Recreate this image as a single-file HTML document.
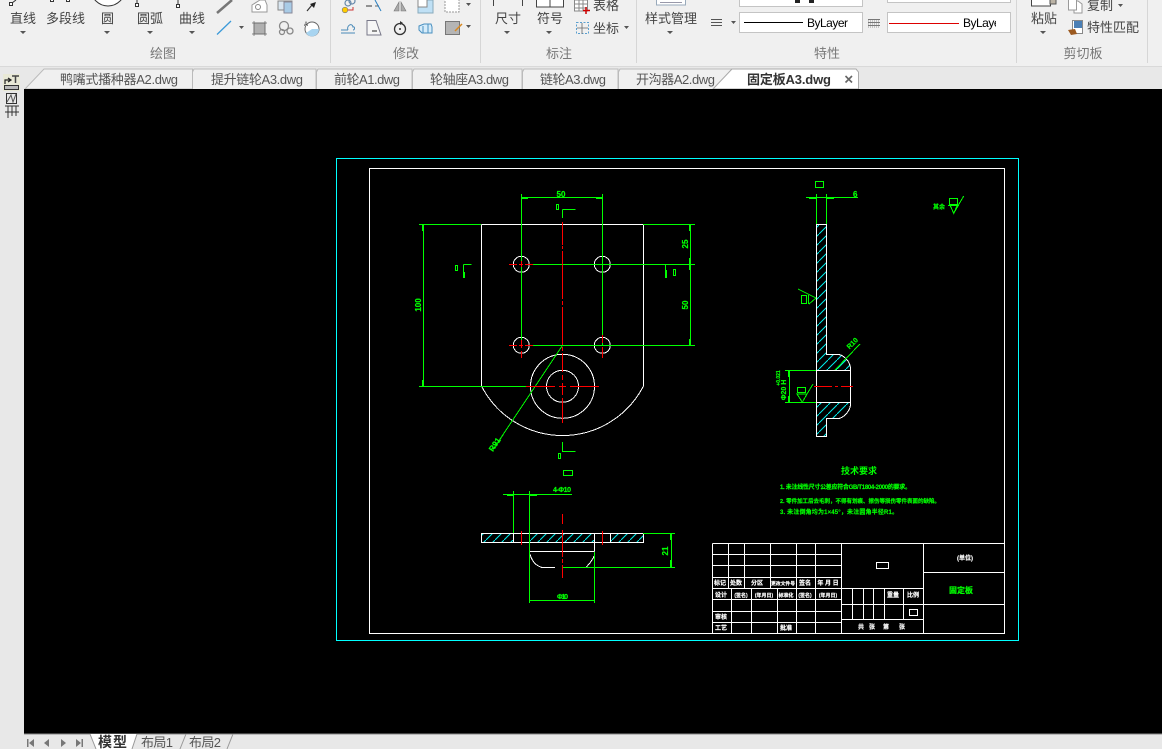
<!DOCTYPE html>
<html lang="zh"><head><meta charset="utf-8"><title>固定板A3.dwg</title>
<style>
html,body{margin:0;padding:0;width:1162px;height:749px;overflow:hidden;background:#f0f0f0}
svg{display:block;position:absolute;left:0;top:0}
text{font-family:"Liberation Sans","Noto Sans CJK SC",sans-serif}
.l{font-size:13px;fill:#444}
.s{font-size:13px;fill:#777;text-anchor:middle}
.t{font-size:13px;fill:#555}
.c{fill:#555}
.d{fill:#0f0;font-size:8px;font-weight:bold;stroke:#0f0;stroke-width:.2}
.n{fill:#0f0;font-size:6px;font-weight:bold;stroke:#0f0;stroke-width:.15}
.w{fill:#fff;font-size:6px;font-weight:bold;text-anchor:middle;stroke:#fff;stroke-width:.15}
</style></head><body>
<svg width="1162" height="749" viewBox="0 0 1162 749" xmlns="http://www.w3.org/2000/svg">
<defs>
<pattern id="h" patternUnits="userSpaceOnUse" width="9" height="9"><path d="M-1 10L10 -1" stroke="#0ee" stroke-width="1" fill="none"/></pattern>
</defs>

<!-- ribbon -->
<rect width="1162" height="66" fill="#f0f0f0"/>
<rect y="66" width="1162" height="1.5" fill="#d9d9d9"/>
<rect y="67" width="1162" height="22" fill="#e8e8e8"/>
<g stroke="#d6d6d6" stroke-width="1"><path d="M330.500 0V63M480.500 0V63M636.500 0V63M1016.500 0V63M1147.500 0V63"/></g>

<!-- ribbon labels -->
<text class="l" x="10" y="23" textLength="26">直线</text>
<text class="l" x="46" y="23" textLength="39">多段线</text>
<text class="l" x="101" y="23" textLength="13">圆</text>
<text class="l" x="137" y="23" textLength="26">圆弧</text>
<text class="l" x="179" y="23" textLength="26">曲线</text>
<text class="s" x="163" y="58">绘图</text>
<text class="s" x="406" y="58">修改</text>
<text class="l" x="495" y="23" textLength="26">尺寸</text>
<text class="l" x="537" y="23" textLength="26">符号</text>
<text class="l" x="593" y="10" textLength="26">表格</text>
<text class="l" x="593" y="33" textLength="26">坐标</text>
<text class="s" x="559" y="58">标注</text>
<text class="l" x="645" y="23" textLength="52">样式管理</text>
<text class="s" x="827" y="58">特性</text>
<text class="l" x="1031" y="23" textLength="26">粘贴</text>
<text class="l" x="1087" y="10" textLength="26">复制</text>
<text class="l" x="1087" y="32" textLength="52">特性匹配</text>
<text class="s" x="1083" y="58">剪切板</text>

<!-- carets -->
<g class="c">
<path d="M20 31h6l-3 3zM104 31h6l-3 3zM147 31h6l-3 3zM189 31h6l-3 3zM239 26h5l-2.500 3zM466 25h5l-2.500 3zM466 3h5l-2.500 3zM504 31h6l-3 3zM546 31h6l-3 3zM624 26h5l-2.500 3zM667 31h6l-3 3zM731 21h5l-2.500 3zM852 21h6l-3 3zM1000 21h6l-3 3zM1040 31h6l-3 3zM1118 4h5l-2.500 3z"/>
</g>

<!-- draw icons -->
<g fill="none" stroke="#333" stroke-width="1">
<path d="M12 3L16 0"/><rect x="9.500" y="2.500" width="3" height="3" fill="#fff"/>
<rect x="50.500" y="-1.500" width="3" height="3" fill="#fff"/><rect x="66.500" y="-1.500" width="3" height="3" fill="#fff"/>
<circle cx="108" cy="-11" r="17" fill="#fff"/>
<rect x="135.500" y="3.500" width="3" height="3" fill="#fff"/><path d="M137 3V0"/>
<rect x="176.500" y="4.500" width="3" height="3" fill="#fff"/><path d="M178 4V0"/>
</g>
<path d="M217 13L232 0" stroke="#777" stroke-width="2.500"/>
<path d="M217 34.500L231 21" stroke="#3b9ad9" stroke-width="1.300"/>
<path d="M252 5L260 0H265L267 5V12H252Z" fill="#fff" stroke="#999"/><circle cx="258" cy="7" r="2.500" fill="none" stroke="#888"/>
<rect x="278" y="1" width="14" height="9" fill="#d9e6f0" stroke="#888"/><rect x="284" y="2" width="8" height="11" fill="#a8cbe6" stroke="#889"/>
<path d="M307 11L312 5" stroke="#333" stroke-width="1.200"/><path d="M310 4L316 2L314 8Z" fill="#222"/>
<rect x="254" y="23" width="11" height="11" fill="#b0b0b0" stroke="#888"/><path d="M252 23H267M252 34H267M254 21V36M265 21V36" stroke="#666" fill="none" stroke-width=".7"/>
<g fill="none" stroke="#888" stroke-width="1.300"><circle cx="284" cy="26" r="4.500"/><circle cx="290" cy="31" r="3"/><circle cx="282" cy="32" r="2.500"/></g>
<circle cx="312" cy="29" r="7" fill="#fff" stroke="#666"/><path d="M312 29H319A7 7 0 0 1 306 33Z" fill="#a8d4f0"/>
<text x="304" y="26" font-size="6" fill="#333">A</text>
<!-- modify icons -->
<circle cx="345" cy="10" r="2.800" fill="#fc0" stroke="#777" stroke-width=".6"/>
<g fill="none" stroke="#68a" stroke-width="1.200"><circle cx="348" cy="3" r="3"/><circle cx="352" cy="1" r="3"/></g>
<path d="M348 10H353V7" stroke="#c33" fill="none"/>
<path d="M366 6H372" stroke="#333"/><path d="M375 6H379" stroke="#666"/><path d="M375 0L381 11" stroke="#2a7fc0"/>
<path d="M399 2V11H394ZM401 2V11H406Z" fill="#aaa" stroke="#777" stroke-width=".6"/>
<rect x="418" y="0" width="15" height="13" fill="#bfe0f5" stroke="#8ab"/><rect x="418" y="-2" width="9" height="9" fill="#fff" stroke="#888"/>
<rect x="445" y="-2" width="14" height="14" fill="#fff" stroke="#999" stroke-dasharray="2 1"/>
<path d="M341 33H355M341 30H348M348 30C346 26 352 22 353 27C355 26 355 30 353 30" fill="none" stroke="#4a8ab8" stroke-width="1"/>
<path d="M367 20.500H376L381 35H367Z" fill="#f6f6f6" stroke="#778"/><path d="M372 31H377" stroke="#222"/>
<circle cx="400" cy="29" r="5.500" fill="none" stroke="#333" stroke-width="1.300"/><circle cx="400" cy="29" r="1" fill="#333"/><path d="M400 21l3 2-3 2z" fill="#333"/>
<g fill="#d6ecfa" stroke="#4a90c0"><path d="M419 26L424 24H431L432 27V33H422L419 30Z"/><path d="M423 26V33M428 24V33"/></g>
<rect x="445.500" y="21.500" width="14" height="13" fill="#b5b5b5" stroke="#777"/><path d="M455 31L462 24" stroke="#d88820" stroke-width="1.500"/>
<!-- annotate icons -->
<path d="M493.500 0V6M522.500 0V6" stroke="#444"/>
<path d="M536.500 0V7H563.500V0M550 0V7" fill="#fff" stroke="#444"/>
<g stroke="#888" fill="#fff"><rect x="574.500" y="0" width="13" height="11"/><path d="M574 4H587M574 8H587M579 0V11M583 0V11" fill="none"/></g>
<path d="M586 7V14M583 10.500H590" stroke="#c00" stroke-width="1.500"/>
<g fill="none" stroke="#5a9fcf" stroke-dasharray="2 1.500"><rect x="576.500" y="22.500" width="12" height="11"/></g><path d="M582 23V34M577 28H588" stroke="#666" stroke-width=".8"/>
<rect x="656.500" y="-4" width="29" height="9" fill="#fff" stroke="#9ab"/><path d="M660 2.500H682" stroke="#99a"/>
<!-- properties -->
<path d="M711 19.500H722M711 22.500H722M711 25.500H722" stroke="#555"/>
<rect x="739.500" y="-10" width="123" height="16.500" fill="#fff" stroke="#c4c4c4"/>
<rect x="795" y="0" width="5" height="3" fill="#222"/><rect x="809" y="0" width="5" height="3" fill="#222"/>
<rect x="739.500" y="12.500" width="123" height="20" fill="#fff" stroke="#c4c4c4"/>
<path d="M744 22.500H803" stroke="#000" stroke-width="1"/>
<text x="807" y="27" font-size="12" fill="#000" textLength="41">ByLayer</text>
<path d="M868 19.500H880M868 22.500H880M868 25.500H880" stroke="#777"/>
<path d="M868 21H880M868 24H880M868 27H880" stroke="#999" stroke-dasharray="1 1"/>
<rect x="887.500" y="-10" width="123" height="12.500" fill="#fff" stroke="#c4c4c4"/>
<rect x="887.500" y="12.500" width="123" height="20" fill="#fff" stroke="#c4c4c4"/>
<path d="M889 23.500H959" stroke="#d00" stroke-width="1"/>
<svg x="963" y="10" width="33" height="24"><text x="0" y="17" font-size="12" fill="#000" textLength="41">ByLayer</text></svg>
<!-- clipboard icons -->
<rect x="1031.500" y="-6" width="19" height="12" fill="#fff" stroke="#444"/><rect x="1050" y="-4" width="6" height="8" fill="#bbb3a5" stroke="#555"/>
<path d="M1069 1H1078L1082 4V13H1074V6H1069Z" fill="#fff" stroke="#999"/><rect x="1068.500" y="-4" width="8" height="14" fill="#fff" stroke="#999"/>
<rect x="1072.500" y="20.500" width="10" height="13" fill="#fff" stroke="#888"/><rect x="1074" y="21" width="8" height="7" fill="#4a7fb5"/>
<path d="M1068 30L1075 29L1077 34L1071 35Z" fill="#9c5a20"/>

<!-- doc tabs -->
<path d="M25 89L44 69H192.500V89Z" fill="#f0f0f0" stroke="#bbb"/>
<path d="M192.500 89V72L194 69H316V89" fill="#f0f0f0" stroke="#bbb"/>
<path d="M316.500 89V72L318 69H412V89" fill="#f0f0f0" stroke="#bbb"/>
<path d="M412.500 89V72L414 69H522V89" fill="#f0f0f0" stroke="#bbb"/>
<path d="M522.500 89V72L524 69H618V89" fill="#f0f0f0" stroke="#bbb"/>
<path d="M618.500 89V72L620 69H732L714 89" fill="#f0f0f0" stroke="#bbb"/>
<path d="M713 89L732 69H856L858.500 72V89Z" fill="#fff" stroke="#aaa"/>
<text class="t" x="60" y="84" textLength="118">鸭嘴式播种器A2.dwg</text>
<text class="t" x="211" y="84" textLength="92">提升链轮A3.dwg</text>
<text class="t" x="334" y="84" textLength="66">前轮A1.dwg</text>
<text class="t" x="430" y="84" textLength="79">轮轴座A3.dwg</text>
<text class="t" x="540" y="84" textLength="66">链轮A3.dwg</text>
<text class="t" x="636" y="84" textLength="79">开沟器A2.dwg</text>
<text x="747" y="84" font-size="13" font-weight="bold" fill="#333" textLength="84">固定板A3.dwg</text>
<path d="M845.500 76L852 82.500M852 76L845.500 82.500" stroke="#666" stroke-width="1.600"/>

<!-- left rail -->
<rect x="0" y="67" width="24" height="682" fill="#e8e8e8"/>
<rect x="3" y="74" width="17" height="17" fill="#e9e9d6"/>
<path d="M5 84V80H10M8 78L11 80L8 82" fill="none" stroke="#222" stroke-width="1.200"/>
<path d="M12 76H19M15.500 76V83" stroke="#444" stroke-width="1.500"/>
<rect x="4.500" y="85.500" width="14" height="4" fill="#bbb" stroke="#333"/>
<rect x="6.500" y="93.500" width="10" height="10" fill="none" stroke="#333"/><path d="M7 102L11 95L13 102L16 94" fill="none" stroke="#555"/>
<path d="M5 106H19M5 112H19M8 106V118M12 106V116M16 106V116" stroke="#333" fill="none"/>

<!-- canvas -->
<rect x="24" y="89" width="1138" height="645" fill="#000"/>

<g shape-rendering="crispEdges" fill="none">
<rect x="336.500" y="158.500" width="682" height="482" stroke="#0ff"/>
<rect x="369.500" y="168.500" width="635" height="465" stroke="#fff"/>
</g>

<!-- hatch -->
<g shape-rendering="crispEdges">
<path d="M816.500 224.500H826.500V354.500H839C845 356 850 362 850.500 370.500H816.500Z" fill="url(#h)"/>
<path d="M816.500 402.500H850.500C850 410 845 417 839 418.500H826.500V436.500H816.500Z" fill="url(#h)"/>
<rect x="481.500" y="533.500" width="32" height="9" fill="url(#h)"/>
<rect x="529.500" y="533.500" width="65" height="9" fill="url(#h)"/>
<rect x="610.500" y="533.500" width="33" height="9" fill="url(#h)"/>
</g>

<!-- white geometry -->
<g fill="none" stroke="#fff" stroke-width="1" shape-rendering="crispEdges">
<path d="M481.500 224.500H643.500V386M481.500 224.500V386A91 91 0 0 0 643.500 386"/>
<circle cx="562.500" cy="386.300" r="32"/><circle cx="562.500" cy="386.300" r="16"/>
<circle cx="521.300" cy="264.300" r="8"/><circle cx="602.300" cy="264.300" r="8"/><circle cx="521.300" cy="345.300" r="8"/><circle cx="602.300" cy="345.300" r="8"/>
<path d="M816.500 224.500H826.500V354.500H839C845 356 850 362 850.500 368V405C850 410 845 417 839 418.500H826.500V436.500H816.500Z"/>
<path d="M816.500 370.500H850.500M816.500 402.500H850.500"/>
<path d="M481.500 533.500H643.500V542.500H481.500ZM513.500 533.500V542.500M529.500 533.500V551.500M594.500 533.500V551.500M610.500 533.500V542.500M529.500 551.500H594.500"/>
<path d="M530 554C532 562 537 566 542 567.500H555M583 567.500H586C589 564 593 560 594 556"/>
</g>

<!-- green dims -->
<g fill="none" stroke="#0f0" stroke-width="1" shape-rendering="crispEdges">
<path d="M521.500 194V345M602.500 194V345M521 197.500H602"/>
<path d="M419 224.500H481M419 386.500H526M423.500 225V386"/>
<path d="M643 224.500H695M530 264.500H695M530 345.500H695M690.500 225V345"/>
<path d="M806 197.500H858M816.500 194V224M826.500 194V224"/>
<path d="M785 370.500H816M785 402.500H816M789.500 371V402"/>
<path d="M798 289L816 298L809 304M808.500 295V304"/>
<rect x="801.500" y="295.500" width="5" height="8"/>
<rect x="815.500" y="181.500" width="8" height="6"/>
<rect x="797.500" y="387.500" width="8" height="5"/>
<rect x="949.500" y="198.500" width="8" height="6"/>
<path d="M948 205.500H959"/>
<path d="M503 494.500H572M513.500 491V533M529.500 491V603M594.500 552V603M530 600.500H594"/>
<path d="M643 533.500H675M562 567.500H675M671.500 534V567"/>
<rect x="556.500" y="204.500" width="2" height="5"/><path d="M562.500 209.500H575.500M562.500 209.500V218"/>
<rect x="455.500" y="265.500" width="2" height="5"/><path d="M463.500 264.500H471.500M463.500 264.500V278"/>
<rect x="673.500" y="269.500" width="2" height="6"/><path d="M665.500 265V278"/>
<path d="M562.500 442V451.500H575.500"/><rect x="558.500" y="453.500" width="2" height="5"/>
<rect x="563.500" y="470.500" width="9" height="5"/>
<path d="M562.300 345.700L493.300 449.300"/><path d="M835 370L860 344"/>
<path d="M797 394H807L802.300 402.300ZM807 394L813 384"/>
<path d="M950 205L953.700 213.300L957.500 205M953.700 213.300L963.700 196"/>
</g>
<g fill="#0f0" shape-rendering="crispEdges">
<rect x="521" y="197" width="7" height="2"/><rect x="596" y="197" width="7" height="2"/>
<rect x="422" y="225" width="2" height="6"/><rect x="422" y="380" width="2" height="6"/>
<rect x="689" y="225" width="2" height="6"/><rect x="689" y="258" width="2" height="12"/><rect x="689" y="339" width="2" height="6"/>
<rect x="809" y="197" width="7" height="2"/><rect x="827" y="197" width="7" height="2"/>
<rect x="788" y="371" width="2" height="6"/><rect x="788" y="396" width="2" height="6"/>
<rect x="507" y="494" width="6" height="2"/><rect x="530" y="494" width="7" height="2"/>
<rect x="670" y="534" width="2" height="6"/><rect x="670" y="560" width="2" height="7"/>
<rect x="463" y="272" width="2" height="6"/><rect x="665" y="270" width="2" height="8"/>
</g>

<!-- red center lines -->
<g fill="none" stroke="#f00" stroke-width="1" shape-rendering="crispEdges">
<path d="M562.500 222V245M562.500 246V249M562.500 251V299M562.500 301V305M562.500 307V345M562.500 347V351M562.500 353V372M562.500 375V380M562.500 383V395M562.500 398V423"/>
<path d="M526 386.500H555M559 386.500H566M570 386.500H599"/>
<path d="M509 264.500H517M519 264.500H523M525 264.500H533M521.500 261V267"/>
<path d="M509 345.500H517M519 345.500H523M525 345.500H533M521.500 340V348M521.500 351V358"/>
<path d="M602.500 335V343M602.500 347V358"/>
<path d="M814 386.500H832M835 386.500H838M841 386.500H853"/>
<path d="M562.500 514V524M562.500 530V557M562.500 559V563M562.500 565V578M521.500 531V545M602.500 531V545"/>
</g>

<!-- green text -->
<text class="d" x="561" y="197" text-anchor="middle">50</text>
<text class="d" transform="translate(421,305) rotate(-90)" text-anchor="middle">100</text>
<text class="d" transform="translate(688,244) rotate(-90)" text-anchor="middle">25</text>
<text class="d" transform="translate(688,305) rotate(-90)" text-anchor="middle">50</text>
<text class="d" transform="translate(497,446) rotate(-56)" text-anchor="middle">R91</text>
<text class="d" x="853" y="197" font-size="9">6</text>
<text class="d" transform="translate(854,345) rotate(-45)" text-anchor="middle" style="font-size:7px">R10</text>
<text class="d" transform="translate(786,390) rotate(-90)" text-anchor="middle" style="font-size:7px">Φ20 H</text>
<text class="d" transform="translate(780,378) rotate(-90)" text-anchor="middle" style="font-size:5px">+0.021</text>
<text class="n" x="933" y="209" textLength="12">其余</text>
<text class="d" x="553" y="492" textLength="18" style="font-size:7px">4-Φ10</text>
<text class="d" x="557" y="599" textLength="11" style="font-size:7px">Φ10</text>
<text class="d" transform="translate(668,551) rotate(-90)" text-anchor="middle">21</text>
<text x="841" y="474" fill="#0f0" font-size="9" font-weight="bold" textLength="36">技术要求</text>
<text class="n" x="780" y="489" textLength="131">1. 未注线性尺寸公差应符合GB/T1804-2000的要求。</text>
<text class="n" x="780" y="503" textLength="160" style="font-size:5.500px">2. 零件加工后去毛刺，不得有划痕、擦伤等损伤零件表面的缺陷。</text>
<text class="n" x="780" y="514" textLength="118">3. 未注倒角均为1×45°，未注圆角半径R1。</text>

<!-- title block -->
<g fill="none" stroke="#fff" stroke-width="1" shape-rendering="crispEdges">
<path d="M712.500 543.500H1004M712.500 543.500V633M712.500 554.500H841M712.500 565.500H841M712.500 577.500H841M712.500 588.500H923M712.500 599.500H841M712.500 611.500H841M712.500 622.500H841"/>
<path d="M728.500 543V588M744.500 543V588M770.500 543V588M796.500 543V633M815.500 543V633M841.500 543V633"/>
<path d="M731.500 588V633M751.500 588V633M777.500 588V633"/>
<path d="M841 604.500H1004M841 619.500H923M923.500 543V633M923 572.500H1004"/>
<path d="M852.500 588V619M863.500 588V619M873.500 588V619M884.500 588V619M903.500 588V619"/>
<rect x="876.500" y="562.500" width="12" height="6"/>
<rect x="909.500" y="609.500" width="8" height="6"/>
</g>
<g>
<text class="w" x="720" y="585">标记</text><text class="w" x="736" y="585">处数</text><text class="w" x="757" y="585">分区</text><text class="w" x="783" y="585" style="font-size:4.800px">更改文件号</text><text class="w" x="805" y="585">签名</text><text class="w" x="828" y="585">年 月 日</text>
<text class="w" x="721" y="597">设计</text><text class="w" x="741" y="597" style="font-size:5px">(签名)</text><text class="w" x="764" y="597" style="font-size:5px">(年月日)</text><text class="w" x="786" y="597" style="font-size:5px">标准化</text><text class="w" x="805" y="597" style="font-size:5px">(签名)</text><text class="w" x="828" y="597" style="font-size:5px">(年月日)</text>
<text class="w" x="721" y="619">审核</text><text class="w" x="721" y="630">工艺</text><text class="w" x="786" y="630">批准</text>
<text class="w" x="893" y="597">重量</text><text class="w" x="913" y="597">比例</text>
<text class="w" x="861" y="629">共</text><text class="w" x="872" y="629">张</text><text class="w" x="886" y="629">第</text><text class="w" x="902" y="629">张</text>
<text class="w" x="965" y="560">(单位)</text>
<text x="961" y="593" fill="#0f0" font-size="8" font-weight="bold" text-anchor="middle" stroke="#0f0" stroke-width=".2">固定板</text>
</g>

<!-- bottom bar -->
<rect x="0" y="734" width="1162" height="15" fill="#e8e8e8"/>
<rect x="24" y="733.500" width="1138" height="1" fill="#888"/>
<g fill="#777">
<path d="M27 739h1.500v8H27zM34 739v8l-5-4z"/>
<path d="M49 739v8l-5-4z"/>
<path d="M61 739v8l5-4z"/>
<path d="M76 739v8l5-4zM81.500 739H83v8h-1.500z"/>
</g>
<path d="M90 734L96 749H132L137 734Z" fill="#fff"/>
<path d="M90 734L96 749M132 749L137 734M180 749L186 734M227 749L233 734" stroke="#999" fill="none"/>
<text x="98" y="747" font-size="14" font-weight="bold" fill="#333" textLength="29">模型</text>
<text x="141" y="747" font-size="13" fill="#555" textLength="32">布局1</text>
<text x="189" y="747" font-size="13" fill="#555" textLength="32">布局2</text>
</svg>
</body></html>
